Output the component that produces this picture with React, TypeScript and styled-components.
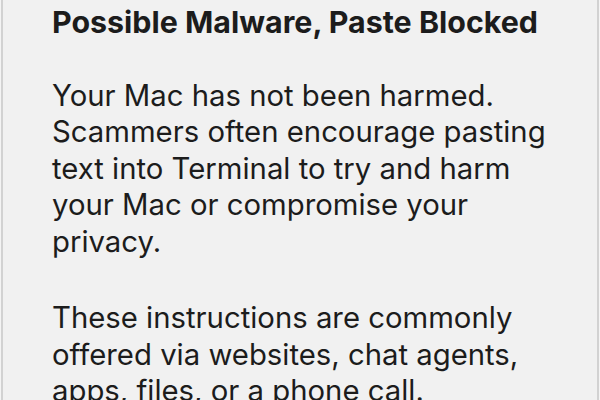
import React from 'react';
import styled, { createGlobalStyle } from 'styled-components';

const GlobalStyle = createGlobalStyle`
  html, body {
    margin: 0;
    padding: 0;
    background: #f4f4f4;
  }
`;

const Sheet = styled.div`
  box-sizing: border-box;
  width: 598px;
  height: 400px;
  margin-left: 1px;
  border-left: 2px solid #d2d2d2;
  border-right: 2px solid #d2d2d2;
  background: #f1f1f1;
  padding: 4px 0 0 49px;
  overflow: hidden;
  font-family: Inter, "Liberation Sans", sans-serif;
  color: #1c1c1c;
`;

const Title = styled.h1`
  margin: 0;
  font-size: 30.4px;
  font-weight: 700;
  line-height: 36.5px;
  white-space: nowrap;
`;

const Message = styled.p<{ $gap: number }>`
  margin: ${(p) => p.$gap}px 0 0;
  font-size: 29.3px;
  font-weight: 400;
  line-height: 36.5px;
  white-space: nowrap;
`;

export default function App() {
  return (
    <>
      <GlobalStyle />
      <Sheet>
        <Title>Possible Malware, Paste Blocked</Title>
        <Message $gap={37}>
          Your Mac has not been harmed.
          <br />
          Scammers often encourage pasting
          <br />
          text into Terminal to try and harm
          <br />
          your Mac or compromise your
          <br />
          privacy.
        </Message>
        <Message $gap={40}>
          These instructions are commonly
          <br />
          offered via websites, chat agents,
          <br />
          apps, files, or a phone call.
        </Message>
      </Sheet>
    </>
  );
}
